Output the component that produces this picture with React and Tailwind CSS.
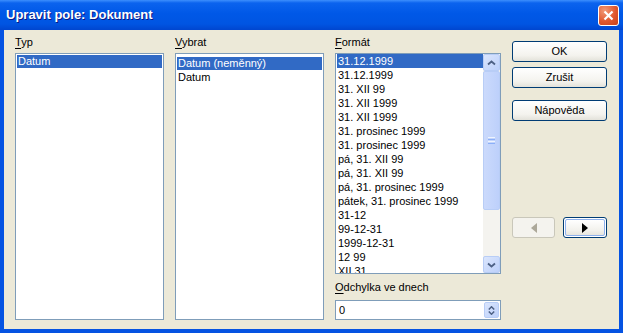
import React from "react";

const formats = [
  "31.12.1999",
  "31.12.1999",
  "31. XII 99",
  "31. XII 1999",
  "31. XII 1999",
  "31. prosinec 1999",
  "31. prosinec 1999",
  "pá, 31. XII 99",
  "pá, 31. XII 99",
  "pá, 31. prosinec 1999",
  "pátek, 31. prosinec 1999",
  "31-12",
  "99-12-31",
  "1999-12-31",
  "12 99",
  "XII 31",
];

const Chevron = ({ down }) => (
  <svg width="9" height="6" viewBox="0 0 9 6">
    <path
      d={down ? "M1 1.5 L4.5 4.5 L8 1.5" : "M1 4.5 L4.5 1.5 L8 4.5"}
      fill="none"
      stroke="#4d6185"
      strokeWidth="1.8"
    />
  </svg>
);

const ScrollButton = ({ down }) => (
  <div className="h-[17px] w-[17px] rounded-[2px] border border-[#b8cdf6] bg-[linear-gradient(135deg,#dbe6fd,#bcd0fa)] flex items-center justify-center">
    <Chevron down={down} />
  </div>
);

const Button = ({ children }) => (
  <button className="h-[21px] w-[95px] rounded-[3px] border border-[#003c74] bg-[linear-gradient(to_bottom,#ffffff,#f4f3ee_70%,#e3e2da)] text-[11px] text-black flex items-center justify-center">
    {children}
  </button>
);

const Label = ({ k, rest }) => (
  <div className="h-[14px] leading-[14px] text-[11px] text-black">
    <span className="underline underline-offset-2">{k}</span>
    {rest}
  </div>
);

export default function App() {
  return (
    <div className="w-[623px] h-[333px] flex flex-col bg-[#0553e2] font-['Liberation_Sans',Arial,sans-serif]">
      <div className="h-[30px] shrink-0 flex items-center justify-between pl-[6px] pr-[4px] bg-[linear-gradient(to_bottom,#3d8ffd_0%,#0b63ee_10%,#0058e7_45%,#0055e2_80%,#0046cf_100%)]">
        <span className="text-white font-bold text-[13px] [text-shadow:1px_1px_#0a1883]">
          Upravit pole: Dokument
        </span>
        <div className="h-[21px] w-[21px] rounded-[3px] border border-white bg-[radial-gradient(circle_at_30%_25%,#f29a78,#e0582f_55%,#c8411a)] flex items-center justify-center">
          <svg width="11" height="11" viewBox="0 0 11 11">
            <path d="M1.5 1.5 L9.5 9.5 M9.5 1.5 L1.5 9.5" stroke="white" strokeWidth="2.2" />
          </svg>
        </div>
      </div>

      <div className="flex-1 mx-[4px] mb-[4px] bg-[#ece9d8] flex gap-[11px] pl-[11px] pr-[12px] pt-[5px] pb-[9px] text-[11px]">
        <div className="w-[149px] flex flex-col gap-[4px]">
          <Label k="T" rest="yp" />
          <div className="flex-1 bg-white border border-[#7f9db9] p-[1px]">
            <div className="h-[13px] leading-[13px] bg-[#316ac5] text-white pl-[1px]">Datum</div>
          </div>
        </div>

        <div className="w-[149px] flex flex-col gap-[4px]">
          <Label k="V" rest="ybrat" />
          <div className="flex-1 bg-white border border-[#7f9db9] pt-[3px] px-[1px]">
            <div className="h-[13px] leading-[13px] bg-[#316ac5] text-white pl-[1px]">Datum (neměnný)</div>
            <div className="h-[13px] leading-[13px] pl-[1px] mt-[1px]">Datum</div>
          </div>
        </div>

        <div className="w-[166px] flex flex-col">
          <Label k="F" rest="ormát" />
          <div className="mt-[4px] h-[221px] bg-white border border-[#7f9db9] flex overflow-hidden">
            <div className="flex-1 pl-[1px] overflow-hidden">
              {formats.map((f, i) => (
                <div
                  key={i}
                  className={`h-[14px] leading-[14px] pl-[1px] whitespace-nowrap ${
                    i === 0 ? "bg-[#316ac5] text-white" : "text-black"
                  }`}
                >
                  {f}
                </div>
              ))}
            </div>
            <div className="w-[17px] flex flex-col bg-[#f4f3ef]">
              <ScrollButton />
              <div className="h-[139px] rounded-[2px] border border-[#b8cdf6] bg-[linear-gradient(to_right,#cbdafc,#bdd0fb)] flex flex-col items-center justify-center gap-[1px]">
                <div className="w-[7px] h-[1px] bg-[#eef4fe]" />
                <div className="w-[7px] h-[1px] bg-[#8cb0f8]" />
                <div className="w-[7px] h-[1px] bg-[#eef4fe]" />
                <div className="w-[7px] h-[1px] bg-[#8cb0f8]" />
              </div>
              <div className="flex-1" />
              <ScrollButton down />
            </div>
          </div>
          <div className="mt-[6px]">
            <Label k="O" rest="dchylka ve dnech" />
          </div>
          <div className="mt-[6px] h-[20px] bg-white border border-[#7f9db9] flex items-center pl-[3px] pr-[1px]">
            <span className="flex-1 text-black">0</span>
            <div className="h-[16px] w-[15px] rounded-[2px] border border-[#b8cdf6] bg-[linear-gradient(135deg,#dbe6fd,#bcd0fa)] flex flex-col items-center justify-center gap-[1px]">
              <svg width="7" height="4" viewBox="0 0 7 4">
                <path d="M0.8 3.5 L3.5 0.8 L6.2 3.5" fill="none" stroke="#4d6185" strokeWidth="1.5" />
              </svg>
              <svg width="7" height="4" viewBox="0 0 7 4">
                <path d="M0.8 0.5 L3.5 3.2 L6.2 0.5" fill="none" stroke="#4d6185" strokeWidth="1.5" />
              </svg>
            </div>
          </div>
        </div>

        <div className="w-[95px] flex flex-col pt-[6px]">
          <Button>OK</Button>
          <div className="mt-[5px]">
            <Button>Zrušit</Button>
          </div>
          <div className="mt-[12px]">
            <Button>Nápověda</Button>
          </div>
          <div className="mt-[96px] flex justify-between">
            <div className="h-[21px] w-[43px] rounded-[3px] border border-[#c9c7ba] bg-[#f4f3ee] flex items-center justify-center">
              <svg width="6" height="10" viewBox="0 0 6 10">
                <path d="M6 0 L0 5 L6 10 Z" fill="#aca899" />
              </svg>
            </div>
            <div className="h-[21px] w-[44px] rounded-[3px] border border-[#003c74] p-[1px] bg-white">
              <div className="h-full w-full rounded-[2px] border border-[#8fb1ec] bg-[linear-gradient(to_bottom,#ffffff,#f2f1ec_70%,#e6e5de)] flex items-center justify-center">
                <svg width="6" height="10" viewBox="0 0 6 10">
                  <path d="M0 0 L6 5 L0 10 Z" fill="#000" />
                </svg>
              </div>
            </div>
          </div>
        </div>
      </div>
    </div>
  );
}
